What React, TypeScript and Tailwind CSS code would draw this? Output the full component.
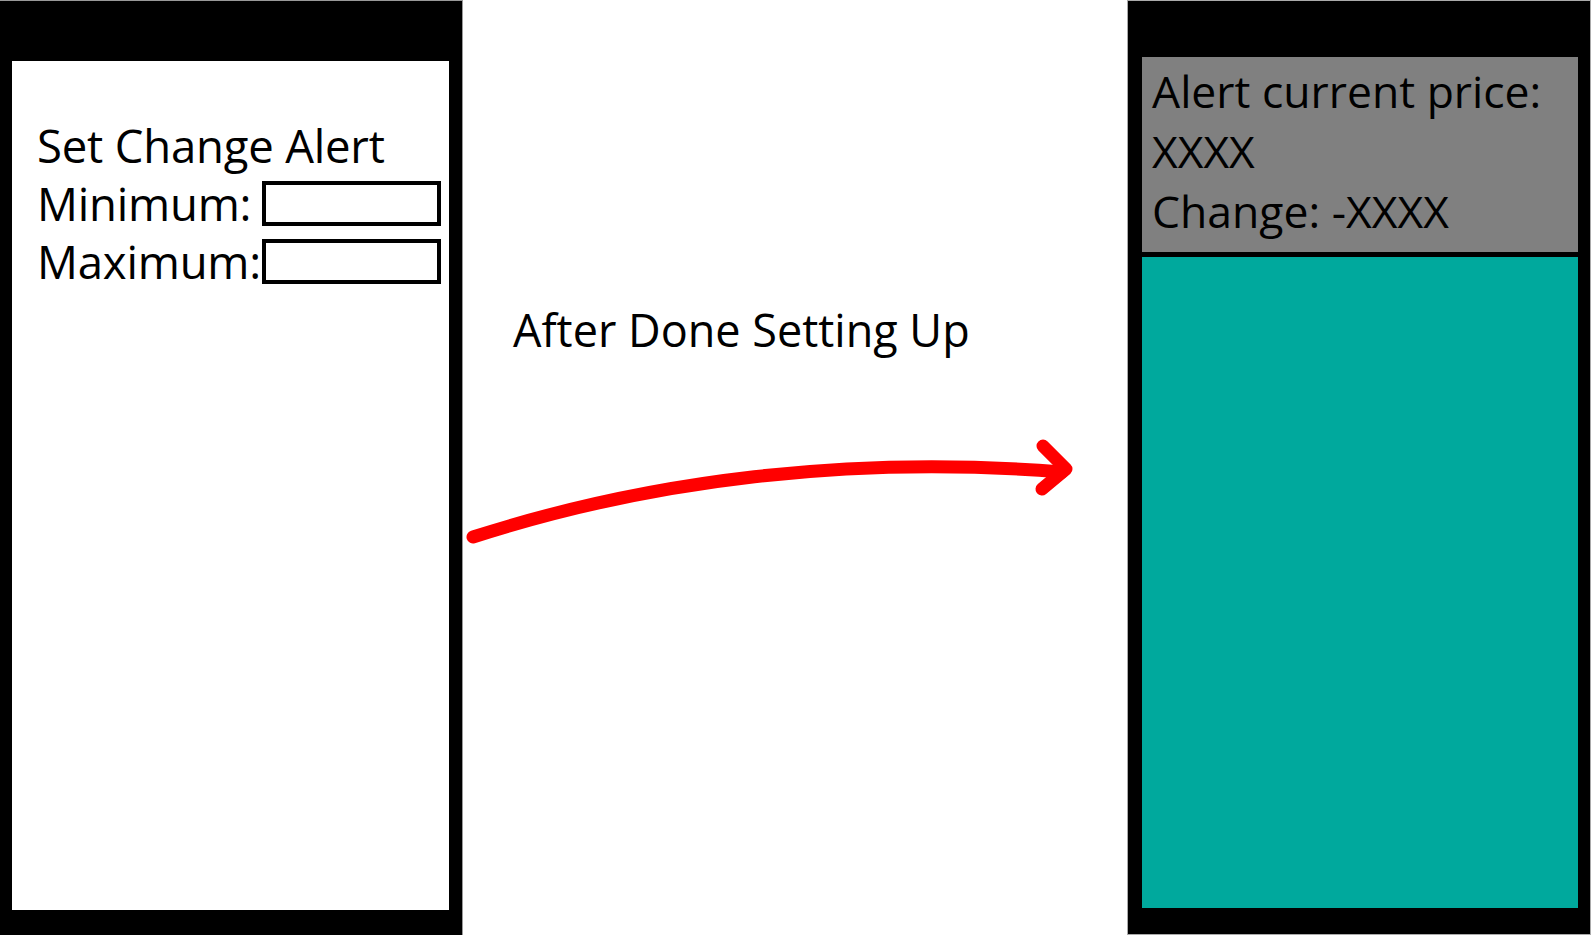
const font = { fontFamily: '"Open Sans", "Noto Sans", sans-serif' };

const Field = ({ label }: { label: string }) => (
  <div className="flex items-center h-[58px]">
    <span className="w-[225px] whitespace-nowrap">{label}</span>
    <div className="w-[179px] h-[45px] border-[4px] border-black bg-white" />
  </div>
);

export default function App() {
  return (
    <div
      className="w-[1591px] h-[935px] flex bg-white text-black overflow-hidden"
      style={font}
    >
      {/* setup screen */}
      <div className="w-[463px] h-full bg-black pt-[60px] pl-[12px] pr-[13px] pb-[25px] border-t border-r border-[#999]">
        <div className="h-full bg-white pl-[25px] pt-[55px] text-[45.5px] leading-[58px] tracking-[-0.2px]">
          <div className="whitespace-nowrap">Set Change Alert</div>
          <Field label="Minimum:" />
          <Field label="Maximum:" />
        </div>
      </div>

      {/* transition */}
      <div className="flex-1 flex flex-col">
        <div className="pl-[50px] mt-[307px] text-[45px] leading-[45px] whitespace-nowrap">
          After Done Setting Up
        </div>
        <svg width="664" height="130" viewBox="0 0 664 130" className="mt-[78px]">
          <path
            d="M10 107 C187 50 387 25 599 42"
            fill="none"
            stroke="#ff0000"
            strokeWidth="13"
            strokeLinecap="round"
          />
          <path
            d="M580 16 L603 39 L579 59"
            fill="none"
            stroke="#ff0000"
            strokeWidth="13"
            strokeLinecap="round"
            strokeLinejoin="round"
          />
        </svg>
      </div>

      {/* alert screen */}
      <div className="w-[464px] h-full bg-black pt-[56px] pl-[14px] pr-[12px] pb-[26px] border border-[#aaa] flex flex-col gap-[5px]">
        <div className="h-[195px] bg-[#808080] pl-[10px] pt-[4px] text-[44.5px] leading-[60px]">
          <div className="whitespace-nowrap">Alert current price:</div>
          <div>XXXX</div>
          <div className="whitespace-nowrap">Change: -XXXX</div>
        </div>
        <div className="flex-1 bg-[#00a99d]" />
      </div>
    </div>
  );
}
